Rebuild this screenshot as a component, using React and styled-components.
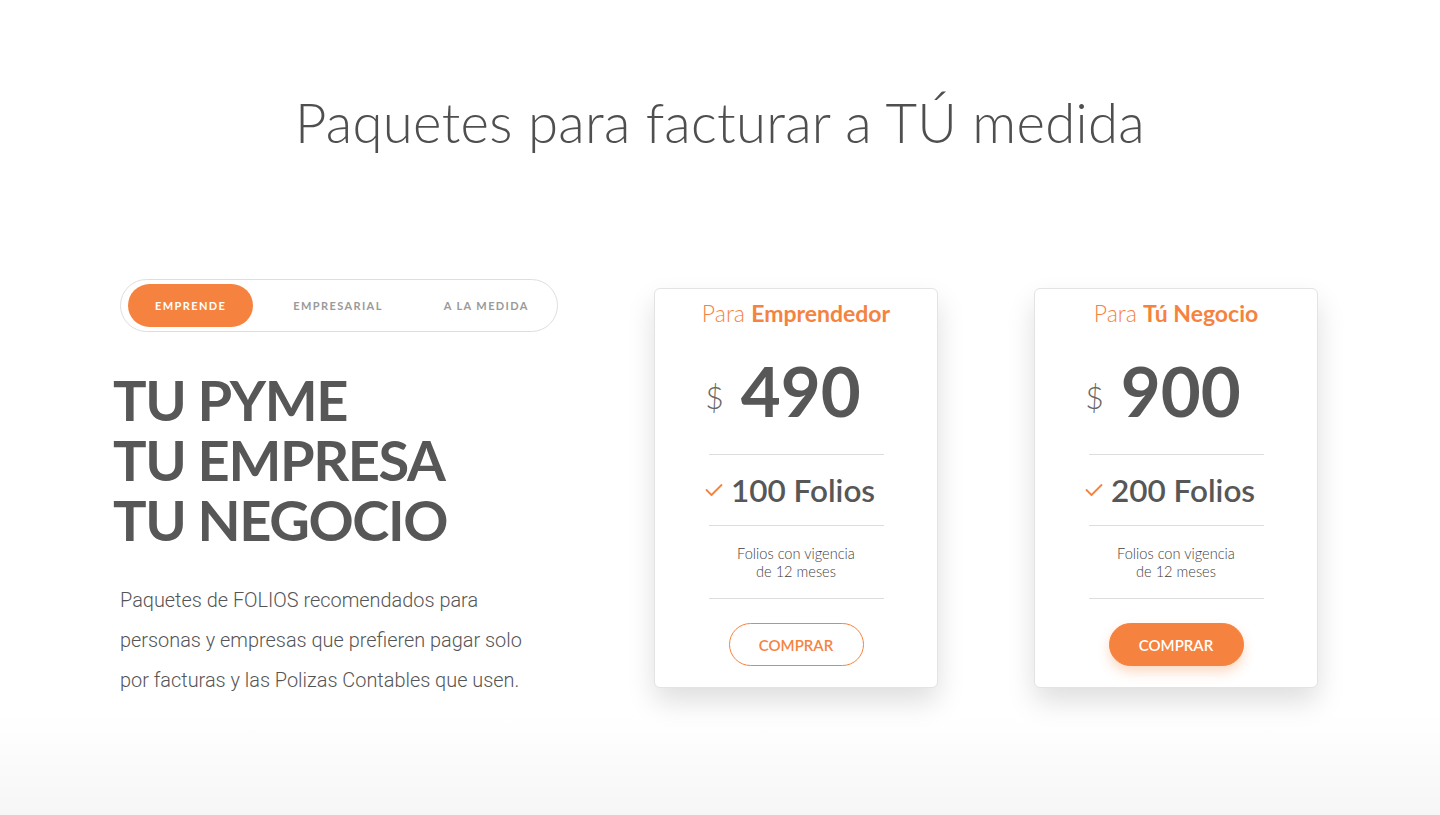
import React from 'react'
import styled, { createGlobalStyle } from 'styled-components'

const GlobalStyle = createGlobalStyle`
  html, body {
    margin: 0;
    padding: 0;
    background: #fff;
  }
  * {
    box-sizing: border-box;
  }
`;

const orange = '#f5833f';
const gray = '#575757';

const Page = styled.div`
    min-height: 815px;
    background: linear-gradient(to bottom, #ffffff 715px, #f6f6f6 815px);
    font-family: Lato, "Noto Sans", sans-serif;
    color: ${gray};
    overflow: hidden;
`;

const Title = styled.h1`
    margin: 0;
    padding-top: 84px;
    text-align: center;
    font-size: 54.5px;
    font-weight: 300;
    line-height: 76px;
    color: #4f4f4f;
    letter-spacing: 0.3px;
`;

const Row = styled.div`
    display: flex;
    align-items: flex-start;
    padding: 0 120px;
    margin-top: 119px;
`;

const Left = styled.div`
    width: 438px;
    flex-shrink: 0;
`;

const Tabs = styled.div`
    display: flex;
    align-items: center;
    height: 53px;
    border: 1px solid #dedede;
    border-radius: 27px;
    padding: 0 7px;
`;

const Tab = styled.button`
    height: 43px;
    width: ${p => p.$w}px;
    border: none;
    border-radius: 22px;
    background: ${p => (p.$active ? orange : 'transparent')};
    color: ${p => (p.$active ? '#fff' : '#9a9a9a')};
    font-family: Lato, "Noto Sans", sans-serif;
    font-size: 11px;
    font-weight: 700;
    letter-spacing: 1.4px;
    cursor: pointer;
`;

const Heading = styled.h2`
    margin: 38px 0 0 -7px;
    font-size: 56px;
    font-weight: 700;
    line-height: 60px;
    letter-spacing: -1.4px;
    color: ${gray};
`;

const Text = styled.p`
    margin: 31px 0 0;
    max-width: 414px;
    font-family: Roboto, sans-serif;
    font-weight: 300;
    font-size: 19.9px;
    line-height: 40px;
    color: #555;
`;

const Cards = styled.div`
    display: flex;
    gap: 96px;
    margin-left: 96px;
    margin-top: 9px;
`;

const Card = styled.div`
    width: 284px;
    height: 400px;
    background: #fff;
    border: 1px solid #e3e3e3;
    border-radius: 6px;
    box-shadow: 0 14px 28px rgba(0, 0, 0, 0.13);
    display: flex;
    flex-direction: column;
    align-items: center;
    padding-top: 9px;
`;

const CardTitle = styled.div`
    font-size: 23px;
    line-height: 30px;
    color: ${orange};
    font-weight: 300;

    b {
        font-weight: 700;
    }
`;

const Price = styled.div`
    display: flex;
    align-items: baseline;
    gap: 17px;
    margin-top: 27px;
    height: 72px;
    margin-left: -26px;
`;

const Dollar = styled.span`
    font-size: 32px;
    font-weight: 300;
    color: #666;
    position: relative;
    top: -8px;
`;

const Amount = styled.span`
    font-size: 69px;
    font-weight: 700;
    line-height: 72px;
    color: ${gray};
`;

const Divider = styled.div`
    width: 175px;
    height: 1px;
    background: #dddddd;
    flex-shrink: 0;
`;

const Spacer = styled.div`
    height: ${p => p.$h}px;
    flex-shrink: 0;
`;

const Folios = styled.div`
    display: flex;
    align-items: center;
    gap: 8px;
    height: 70px;
    font-size: 31.5px;
    font-weight: 600;
    color: ${gray};
    margin-left: -12px;
`;

const Note = styled.div`
    height: 72px;
    padding-top: 19px;
    text-align: center;
    font-size: 14.6px;
    line-height: 18px;
    font-weight: 300;
    color: #3f3f3f;
`;

const Buy = styled.button`
    margin-top: 24px;
    width: 135px;
    height: 43px;
    border-radius: 22px;
    border: 1px solid ${orange};
    background: ${p => (p.$filled ? orange : '#fff')};
    color: ${p => (p.$filled ? '#fff' : orange)};
    box-shadow: ${p => (p.$filled ? '0 6px 12px rgba(245, 131, 63, 0.3)' : 'none')};
    font-family: Lato, "Noto Sans", sans-serif;
    font-size: 15px;
    font-weight: 600;
    cursor: pointer;
`;

function CheckMark() {
  return (
    <svg width="18" height="14" viewBox="0 0 18 14">
      <polyline points="1.5,7 6.5,12 16.5,2" fill="none" stroke={orange} strokeWidth="1.8" strokeLinecap="round" strokeLinejoin="round" />
    </svg>
  )
}

const plans = [
  { lead: 'Para', name: 'Emprendedor', price: '490', folios: '100 Folios', filled: false },
  { lead: 'Para', name: 'Tú Negocio', price: '900', folios: '200 Folios', filled: true },
];

function PlanCard({ lead, name, price, folios, filled }) {
  return (
    <Card>
      <CardTitle>{lead} <b>{name}</b></CardTitle>
      <Price>
        <Dollar>$</Dollar>
        <Amount>{price}</Amount>
      </Price>
      <Spacer $h={27} />
      <Divider />
      <Folios>
        <CheckMark />
        {folios}
      </Folios>
      <Divider />
      <Note>
        Folios con vigencia<br />de 12 meses
      </Note>
      <Divider />
      <Buy $filled={filled}>COMPRAR</Buy>
    </Card>
  )
}

export default function App() {
  return (
    <Page>
      <GlobalStyle />
      <Title>Paquetes para facturar a TÚ medida</Title>
      <Row>
        <Left>
          <Tabs>
            <Tab $active $w={126}>EMPRENDE</Tab>
            <Tab $w={170}>EMPRESARIAL</Tab>
            <Tab $w={128}>A LA MEDIDA</Tab>
          </Tabs>
          <Heading>
            TU PYME<br />TU EMPRESA<br />TU NEGOCIO
          </Heading>
          <Text>
            Paquetes de FOLIOS recomendados para personas y empresas que prefieren pagar solo por facturas y las Polizas Contables que usen.
          </Text>
        </Left>
        <Cards>
          {plans.map(p => (
            <PlanCard key={p.price} {...p} />
          ))}
        </Cards>
      </Row>
    </Page>
  )
}
